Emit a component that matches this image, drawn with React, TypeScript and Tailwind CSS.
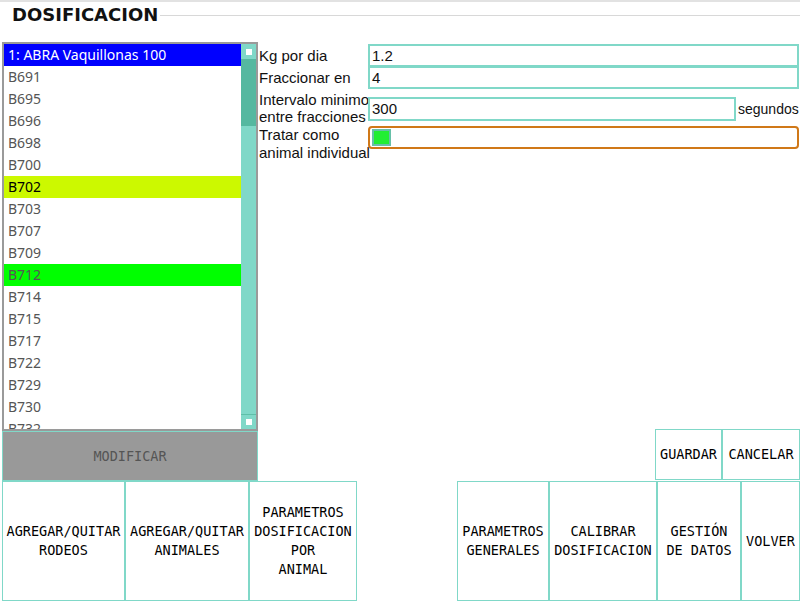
import React from 'react';

const items = [
  { t: '1: ABRA Vaquillonas 100', c: 'bg-[#0000ff] text-white' },
  { t: 'B691' }, { t: 'B695' }, { t: 'B696' }, { t: 'B698' }, { t: 'B700' },
  { t: 'B702', c: 'bg-[#ccf900] text-black' },
  { t: 'B703' }, { t: 'B707' }, { t: 'B709' },
  { t: 'B712', c: 'bg-[#00ff00] text-[#555]' },
  { t: 'B714' }, { t: 'B715' }, { t: 'B717' }, { t: 'B722' }, { t: 'B729' }, { t: 'B730' }, { t: 'B732' },
];

const mono = 'font-["DejaVu_Sans_Mono",monospace] text-[13.5px] leading-[19px]';

function BigButton({ label, w }: { label: string[]; w: string }) {
  return (
    <button className={`${w} shrink-0 h-full border border-[#80d8c8] bg-white text-black ${mono} flex flex-col items-center justify-center`}>
      {label.map((l) => (
        <span key={l}>{l}</span>
      ))}
    </button>
  );
}

export default function App() {
  return (
    <div className="w-[800px] h-[601px] bg-white overflow-hidden flex flex-col font-['Liberation_Sans',sans-serif] text-[#111]">
      <div className="h-[2px] bg-[#e2e2e2]" />
      <div className="h-[40px] flex items-start pl-[12px] pt-[2px]">
        <span className="font-bold text-[18px] leading-[22px] font-['DejaVu_Sans',sans-serif]">DOSIFICACION</span>
        <div className="flex-1 h-px bg-[#d8d8d8] mt-[11px] ml-[2px]" />
      </div>

      <div className="flex h-[439px]">
        <div className="w-[256px] shrink-0 ml-[2px] flex flex-col">
          <div className="h-[389px] border-2 border-[#9a9a9a] flex overflow-hidden">
            <div className="flex-1 overflow-hidden font-['Noto_Sans',sans-serif] text-[14px]">
              {items.map((it) => (
                <div key={it.t} className={`h-[22px] leading-[22px] pl-[4px] ${it.c ?? 'text-[#555]'}`}>
                  {it.t}
                </div>
              ))}
            </div>
            <div className="w-[15px] bg-[#80d8c8] flex flex-col">
              <div className="h-[15px] flex items-center justify-center">
                <div className="w-[6px] h-[6px] bg-white" />
              </div>
              <div className="h-[67px] bg-[#55b8a0]" />
              <div className="flex-1" />
              <div className="h-[15px] flex items-center justify-center border-t border-[#5fbfa8]">
                <div className="w-[6px] h-[6px] bg-white" />
              </div>
            </div>
          </div>
          <button className={`h-[50px] bg-[#999] border border-[#80d8c8] text-[#555] ${mono}`}>MODIFICAR</button>
        </div>

        <div className="flex-1 min-w-0 flex flex-col pl-px pt-px text-[15px]">
          <div className="flex items-center h-[24px]">
            <span className="w-[109px] shrink-0 leading-[17px]">Kg por dia</span>
            <div className="flex-1 h-[23px] border-2 border-[#80d8c8] pl-[2px] leading-[19px] mr-px">1.2</div>
          </div>
          <div className="flex items-center h-[23px] -mt-px">
            <span className="w-[109px] shrink-0 leading-[17px]">Fraccionar en</span>
            <div className="flex-1 h-[23px] border-2 border-[#80d8c8] pl-[2px] leading-[19px] mr-px">4</div>
          </div>
          <div className="flex items-center h-[37px]">
            <span className="w-[109px] shrink-0 leading-[17px] whitespace-nowrap">
              Intervalo minimo
              <br />
              entre fracciones
            </span>
            <div className="w-[368px] shrink-0 h-[24px] border-2 border-[#80d8c8] pl-[2px] leading-[20px] mt-[3px]">300</div>
            <span className="ml-[2px] mt-[3px] leading-[17px] text-[14px] whitespace-nowrap">segundos</span>
          </div>
          <div className="flex items-start h-[38px]">
            <span className="w-[109px] shrink-0 leading-[18px] whitespace-nowrap">
              Tratar como
              <br />
              animal individual
            </span>
            <div className="flex-1 h-[23px] border-2 border-[#d07818] rounded-[4px] mr-px flex items-center pl-[2px]">
              <div className="w-[19px] h-[17px] shrink-0 bg-[#22ee33] border-2 border-[#66c0a8]" />
            </div>
          </div>
          <div className="flex-1" />
          <div className="flex justify-end h-[51px] mb-px">
            <button className={`w-[67px] border border-[#80d8c8] text-black ${mono}`}>GUARDAR</button>
            <button className={`w-[78px] border border-[#80d8c8] text-black ${mono}`}>CANCELAR</button>
          </div>
        </div>
      </div>

      <div className="flex-1 flex pl-[2px]">
        <BigButton w="w-[123px]" label={['AGREGAR/QUITAR', 'RODEOS']} />
        <BigButton w="w-[124px]" label={['AGREGAR/QUITAR', 'ANIMALES']} />
        <BigButton w="w-[108px]" label={['PARAMETROS', 'DOSIFICACION', 'POR', 'ANIMAL']} />
        <div className="w-[100px] shrink-0" />
        <BigButton w="w-[92px]" label={['PARAMETROS', 'GENERALES']} />
        <BigButton w="w-[108px]" label={['CALIBRAR', 'DOSIFICACION']} />
        <BigButton w="w-[84px]" label={['GESTIÓN', 'DE DATOS']} />
        <BigButton w="w-[59px]" label={['VOLVER']} />
      </div>
    </div>
  );
}
